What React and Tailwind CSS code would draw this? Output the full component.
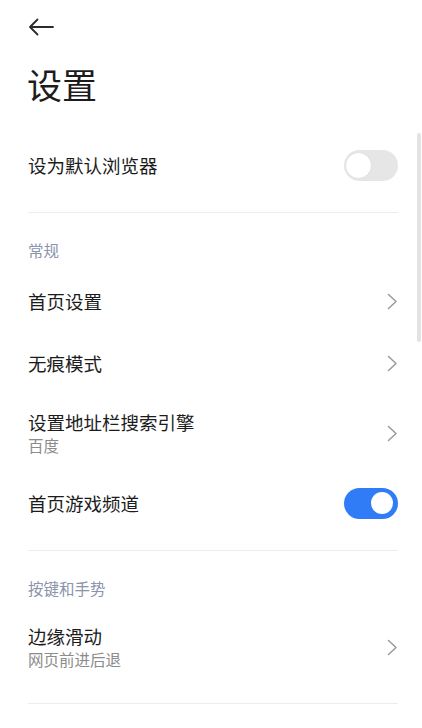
import React from "react";

const font = { fontFamily: '"Noto Sans CJK SC", "Noto Sans", sans-serif' };

function Chevron() {
  return (
    <svg width="11" height="17" viewBox="0 0 11 17" fill="none" className="shrink-0">
      <path d="M1.5 1.5 L9 8.5 L1.5 15.5" stroke="#9a9a9a" strokeWidth="1.5" strokeLinecap="round" strokeLinejoin="round" />
    </svg>
  );
}

function Toggle({ on }) {
  return on ? (
    <div className="w-[54px] h-[31px] rounded-full bg-[#2f7cf6] flex items-center justify-end pr-[5px] shrink-0">
      <div className="w-[22px] h-[22px] rounded-full bg-white" />
    </div>
  ) : (
    <div className="w-[54px] h-[31px] rounded-full bg-[#e6e6e6] flex items-center pl-[1px] shrink-0">
      <div className="w-[27px] h-[27px] rounded-full bg-white border border-[#e0e0e0]" />
    </div>
  );
}

function Row({ title, sub, right, h }) {
  return (
    <div className={`flex items-center justify-between ${h}`}>
      <div className="flex flex-col">
        <div className="text-[18.5px] leading-[24px] text-[#1c1c1c]">{title}</div>
        {sub && <div className="text-[15.5px] leading-[22px] text-[#8c8c8c]">{sub}</div>}
      </div>
      {right}
    </div>
  );
}

function Header({ children }) {
  return (
    <div className="h-[57px] pt-[27px] text-[15.5px] leading-[21px] text-[#8b93ad]">{children}</div>
  );
}

export default function App() {
  return (
    <div className="relative w-[422px] h-[728px] bg-white overflow-hidden" style={font}>
      <div className="pl-[28px] pr-[24px]">
        <div className="h-[54px] flex items-center">
          <svg width="26" height="18" viewBox="0 0 26 18" fill="none">
            <path d="M25 9 H2 M9.5 1.5 L2 9 L9.5 16.5" stroke="#2b2b2b" strokeWidth="1.8" strokeLinecap="round" strokeLinejoin="round" />
          </svg>
        </div>
        <div className="h-[64px] flex items-center text-[35px] leading-[44px] text-[#1c1c1c] -ml-[1px] -mt-[2px] mb-[2px]">设置</div>
        <Row title="设为默认浏览器" right={<Toggle on={false} />} h="h-[94px]" />
        <div className="h-px bg-[#ececec]" />
        <Header>常规</Header>
        <Row title="首页设置" right={<Chevron />} h="h-[62px]" />
        <Row title="无痕模式" right={<Chevron />} h="h-[62px]" />
        <Row title="设置地址栏搜索引擎" sub="百度" right={<Chevron />} h="h-[78px]" />
        <Row title="首页游戏频道" right={<Toggle on={true} />} h="h-[62px]" />
        <div className="h-[16px]" />
        <div className="h-px bg-[#ececec]" />
        <Header>按键和手势</Header>
        <Row title="边缘滑动" sub="网页前进后退" right={<Chevron />} h="h-[78px]" />
        <div className="h-[17px]" />
        <div className="h-px bg-[#ececec]" />
      </div>
      <div className="absolute left-[417px] top-[133px] w-[4px] h-[209px] rounded-full bg-[#e3e3e3]" />
    </div>
  );
}
